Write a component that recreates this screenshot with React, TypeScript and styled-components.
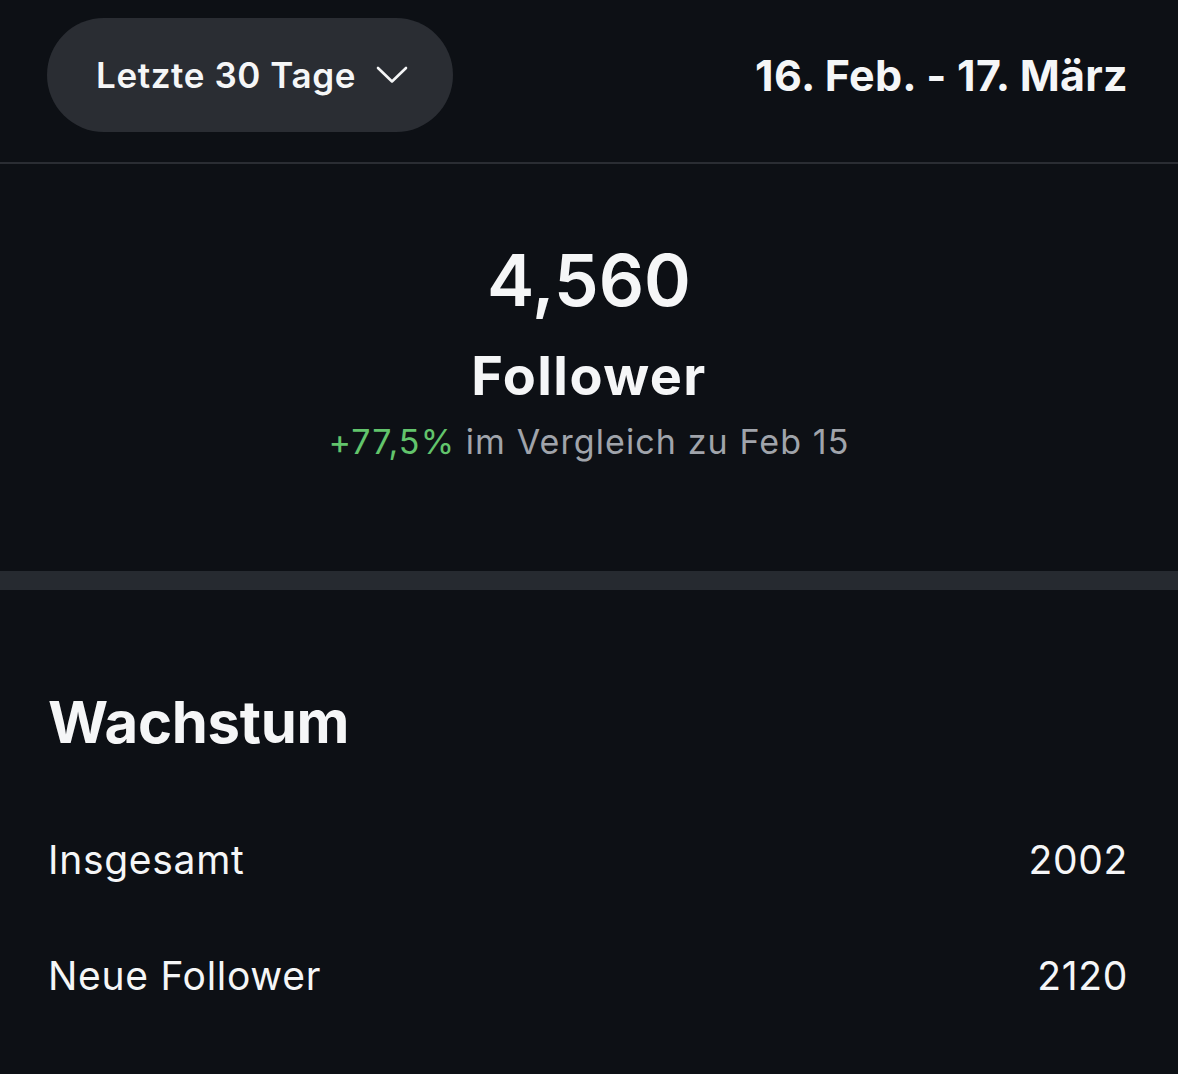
import { createGlobalStyle } from "styled-components";
import styled from "styled-components";

const pal = {
	bg: "#0d1015",
	pill: "#2a2d33",
	line: "#2a2d33",
	band: "#262a30",
	text: "#f5f6f7",
	muted: "#a0a4ab",
	green: "#62c46c",
};

const GlobalStyle = createGlobalStyle`
	html, body {
		margin: 0;
		padding: 0;
		background-color: ${pal.bg};
	}
	body {
		font-family: Inter, "Noto Sans", "Liberation Sans", sans-serif;
		color: ${pal.text};
		-webkit-font-smoothing: antialiased;
	}
	* {
		box-sizing: border-box;
	}
`;

const Page = styled.div`
	width: 1178px;
	min-height: 1074px;
	background-color: ${pal.bg};
	display: flex;
	flex-direction: column;
`;

const Header = styled.header`
	display: flex;
	align-items: center;
	justify-content: space-between;
	padding: 18px 50px 30px 47px;
	border-bottom: 2px solid ${pal.line};
`;

const RangeButton = styled.button`
	display: flex;
	align-items: center;
	gap: 20px;
	height: 114px;
	width: 406px;
	padding: 0 0 0 49px;
	border: none;
	border-radius: 57px;
	background-color: ${pal.pill};
	color: ${pal.text};
	font-family: inherit;
	font-size: 35px;
	font-weight: 600;
	letter-spacing: 0.6px;
	cursor: pointer;
`;

const DateRange = styled.div`
	font-size: 43px;
	font-weight: 700;
	letter-spacing: 0.3px;
`;

const Stats = styled.section`
	display: flex;
	flex-direction: column;
	align-items: center;
	padding: 80px 0 113px;
`;

const BigNumber = styled.div`
	font-size: 71px;
	line-height: 72px;
	font-weight: 600;
`;

const StatLabel = styled.div`
	margin-top: 34px;
	font-size: 54px;
	line-height: 52px;
	font-weight: 700;
	letter-spacing: 1.4px;
`;

const Compare = styled.div`
	margin-top: 23px;
	font-size: 34px;
	line-height: 33px;
	letter-spacing: 1.1px;
	color: ${pal.muted};
`;

const Change = styled.span<{ $up: boolean }>`
	color: ${(p) => (p.$up ? pal.green : "#e5484d")};
`;

const Band = styled.div`
	height: 19px;
	background-color: ${pal.band};
`;

const Growth = styled.section`
	padding: 103px 50px 0 48px;
	display: flex;
	flex-direction: column;
`;

const SectionTitle = styled.h2`
	margin: 0 0 50px;
	font-size: 58px;
	line-height: 58px;
	font-weight: 700;
	letter-spacing: -0.3px;
`;

const Row = styled.div`
	display: flex;
	align-items: center;
	justify-content: space-between;
	height: 116px;
	font-size: 39px;
	line-height: 39px;
	font-weight: 400;
	letter-spacing: 0.7px;
`;

function Chevron() {
	return (
		<svg width="32" height="18" viewBox="0 0 32 18" fill="none">
			<path
				d="M2 2 L16 15.5 L30 2"
				stroke={pal.text}
				strokeWidth="2.6"
				strokeLinecap="round"
				strokeLinejoin="round"
			/>
		</svg>
	);
}

const rows = [
	{ label: "Insgesamt", value: "2002" },
	{ label: "Neue Follower", value: "2120" },
];

export default function App() {
	return (
		<>
			<GlobalStyle />
			<Page>
				<Header>
					<RangeButton>
						Letzte 30 Tage
						<Chevron />
					</RangeButton>
					<DateRange>16. Feb. - 17. März</DateRange>
				</Header>
				<Stats>
					<BigNumber>4,560</BigNumber>
					<StatLabel>Follower</StatLabel>
					<Compare>
						<Change $up>+77,5%</Change> im Vergleich zu Feb 15
					</Compare>
				</Stats>
				<Band />
				<Growth>
					<SectionTitle>Wachstum</SectionTitle>
					{rows.map((r) => (
						<Row key={r.label}>
							<span>{r.label}</span>
							<span>{r.value}</span>
						</Row>
					))}
				</Growth>
			</Page>
		</>
	);
}
